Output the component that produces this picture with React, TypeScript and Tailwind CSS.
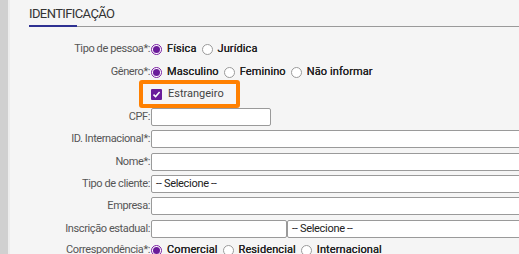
import React from 'react'

const font = { fontFamily: 'Roboto, "Liberation Sans", sans-serif' }

function Radio({ checked }: { checked?: boolean }) {
  return checked ? (
    <span className="flex h-[11px] w-[11px] shrink-0 items-center justify-center rounded-full border border-[#7b1fa2] bg-white">
      <span className="h-[7px] w-[7px] rounded-full bg-[#6a1b9a]" />
    </span>
  ) : (
    <span className="h-[11px] w-[11px] shrink-0 rounded-full border border-[#9a9a9a] bg-white" />
  )
}

function RadioGroup({ options, checked }: { options: string[]; checked: number }) {
  return (
    <div className="flex items-center">
      {options.map((o, i) => (
        <label key={o} className={`flex items-center ${i > 0 ? 'ml-[5px]' : ''}`}>
          <Radio checked={i === checked} />
          <span className="ml-[5px] text-[11px] tracking-[0.1px] text-[#222] [text-shadow:0_0_0.3px_#222]">{o}</span>
        </label>
      ))}
    </div>
  )
}

function Row({ label, children, className = '' }: { label: string; children: React.ReactNode; className?: string }) {
  return (
    <div className={`flex h-[18px] items-center ${className}`}>
      <div className="w-[122px] shrink-0 pr-[1px] text-right text-[11px] tracking-[-0.4px] text-[#555]">{label}</div>
      {children}
    </div>
  )
}

function Input({ w }: { w?: string }) {
  return <div className={`h-[18px] rounded-[2px] border border-[#9a9a9a] bg-white ${w ?? 'flex-1 mr-[-10px]'}`} />
}

function Select({ w }: { w?: string }) {
  return (
    <div className={`flex h-[18px] items-center rounded-[2px] border border-[#9a9a9a] bg-white pl-[4px] text-[11px] tracking-[-0.3px] text-[#222] ${w ?? 'flex-1 mr-[-10px]'}`}>
      -- Selecione --
    </div>
  )
}

export default function App() {
  return (
    <div className="flex h-[254px] w-[519px] overflow-hidden bg-[#f5f5f5]" style={font}>
      <div className="w-[8px] shrink-0 bg-[#d0d0d0]" />
      <div className="w-[2px] shrink-0 bg-[#ededed]" />
      <div className="flex-1 pl-[19px]">
        <div className="pt-[6px] text-[13px] leading-[16px] tracking-[-0.6px] text-[#333]">IDENTIFICAÇÃO</div>
        <div className="mt-[3px] flex h-[2px] items-end">
          <div className="h-[2px] w-[48px] bg-[#2e3192]" />
          <div className="h-[1px] flex-1 bg-[#9a9a9a]" />
        </div>

        <Row label="Tipo de pessoa*:" className="mt-[13px]">
          <RadioGroup options={['Física', 'Jurídica']} checked={0} />
        </Row>
        <Row label="Gênero*:" className="mt-[5px]">
          <RadioGroup options={['Masculino', 'Feminino', 'Não informar']} checked={0} />
        </Row>

        <div className="ml-[110px] mt-[-1px] flex h-[28px] w-[101px] items-center rounded-[3px] border-[4px] border-[#ff8000] pl-[8px]">
          <span className="flex h-[11px] w-[11px] items-center justify-center rounded-[1px] bg-[#6a1b9a]">
            <svg width="9" height="9" viewBox="0 0 9 9" fill="none">
              <path d="M1.5 4.6 L3.6 6.6 L7.6 2" stroke="white" strokeWidth="1.5" />
            </svg>
          </span>
          <span className="ml-[6px] text-[11px] text-[#444]">Estrangeiro</span>
        </div>

        <Row label="CPF:">
          <Input w="w-[120px]" />
        </Row>
        <Row label="ID. Internacional*:" className="mt-[4px]">
          <Input />
        </Row>
        <Row label="Nome*:" className="mt-[5px]">
          <Input />
        </Row>
        <Row label="Tipo de cliente:" className="mt-[4px]">
          <Select />
        </Row>
        <Row label="Empresa:" className="mt-[4px]">
          <Input />
        </Row>
        <Row label="Inscrição estadual:" className="mt-[5px]">
          <Input w="w-[136px]" />
          <Select />
        </Row>
        <Row label="Correspondência*:" className="mt-[3px]">
          <RadioGroup options={['Comercial', 'Residencial', 'Internacional']} checked={0} />
        </Row>
      </div>
    </div>
  )
}
